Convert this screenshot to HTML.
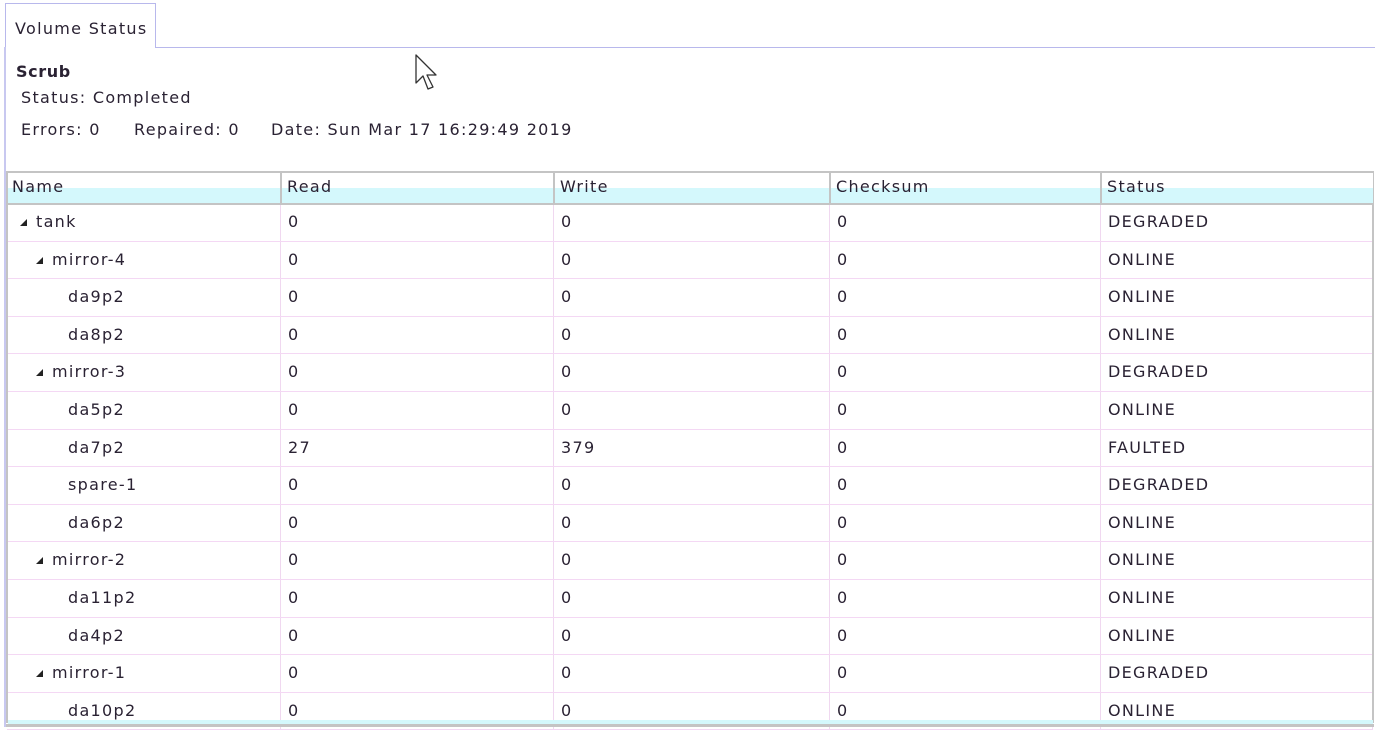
<!DOCTYPE html>
<html><head><meta charset="utf-8"><style>
*{margin:0;padding:0;box-sizing:border-box}
body{width:1375px;height:727px;background:#fff;font-family:"DejaVu Sans","Liberation Sans",sans-serif;font-size:16px;letter-spacing:1.3px;color:#2a2233;position:relative;overflow:hidden}
.a{position:absolute;white-space:nowrap}
.row{position:absolute;left:7px;width:1366px;height:37.6px;border-bottom:1px solid #f4d8f4}
.c{position:absolute;top:0;height:100%;line-height:36px;padding-left:7px;border-right:1px solid #f0d8f0;overflow:hidden}
.t{display:inline-block;width:0;height:0;border-left:7px solid transparent;border-bottom:7px solid #222;margin-right:9px;vertical-align:1px}
</style></head><body>
<div class="a" style="left:5px;top:3px;width:151px;height:45px;border:1px solid #b8b8ec;border-bottom:none;background:#fff"></div>
<div class="a" style="left:155px;top:47px;width:1220px;height:1px;background:#b8b8ec"></div>
<div class="a" style="left:4px;top:47px;width:2px;height:680px;background:#c8c8f0"></div>
<div class="a" style="left:15px;top:19px">Volume Status</div>
<div class="a" style="left:16px;top:62px;font-weight:bold;letter-spacing:0.6px">Scrub</div>
<div class="a" style="left:21px;top:88px">Status: Completed</div>
<div class="a" style="left:21px;top:120px">Errors: 0</div>
<div class="a" style="left:134px;top:120px">Repaired: 0</div>
<div class="a" style="left:271px;top:120px">Date: Sun Mar 17 16:29:49 2019</div>
<svg class="a" style="left:414px;top:54px" width="26" height="40" viewBox="0 0 26 40"><path d="M2 1 L2 29 L9 22 L14 35 L19 33 L13 21 L22 21 Z" fill="#fff" stroke="#333" stroke-width="1.3" stroke-linejoin="round"/></svg>
<div id="rows"></div>
<div class="a" style="left:6px;top:171px;width:1368px;height:552px;border:2px solid #c4c4c4;border-bottom:none"></div>
<div class="a" style="left:8px;top:173px;width:1365px;height:15px;background:#fff"></div>
<div class="a" style="left:8px;top:188px;width:1365px;height:15px;background:#d4f8fc"></div>
<div class="a" style="left:8px;top:203px;width:1365px;height:2px;background:#c4c4c4"></div>
<div class="a" style="left:280px;top:173px;width:2px;height:31px;background:#c4c4c4"></div>
<div class="a" style="left:553px;top:173px;width:2px;height:31px;background:#c4c4c4"></div>
<div class="a" style="left:829px;top:173px;width:2px;height:31px;background:#c4c4c4"></div>
<div class="a" style="left:1100px;top:173px;width:2px;height:31px;background:#c4c4c4"></div>
<div class="a" style="left:12px;top:177px">Name</div>
<div class="a" style="left:287px;top:177px">Read</div>
<div class="a" style="left:560px;top:177px">Write</div>
<div class="a" style="left:836px;top:177px">Checksum</div>
<div class="a" style="left:1107px;top:177px">Status</div>
<div class="a" style="left:8px;top:720px;width:1365px;height:4px;background:#d4f8fc"></div>
<div class="a" style="left:6px;top:724px;width:1368px;height:3px;background:#c4c4c4"></div>
<script>
var d=[[0,1,"tank",0,0,0,"DEGRADED"],[1,1,"mirror-4",0,0,0,"ONLINE"],[2,0,"da9p2",0,0,0,"ONLINE"],[2,0,"da8p2",0,0,0,"ONLINE"],[1,1,"mirror-3",0,0,0,"DEGRADED"],[2,0,"da5p2",0,0,0,"ONLINE"],[2,0,"da7p2",27,379,0,"FAULTED"],[2,0,"spare-1",0,0,0,"DEGRADED"],[2,0,"da6p2",0,0,0,"ONLINE"],[1,1,"mirror-2",0,0,0,"ONLINE"],[2,0,"da11p2",0,0,0,"ONLINE"],[2,0,"da4p2",0,0,0,"ONLINE"],[1,1,"mirror-1",0,0,0,"DEGRADED"],[2,0,"da10p2",0,0,0,"ONLINE"]];
var h="";d.forEach(function(r,i){var pad=r[0]==0?13:r[0]==1?29:61;
h+='<div class="row" style="top:'+(204+37.6*i)+'px"><div class="c" style="left:0;width:274px;padding-left:'+pad+'px">'+(r[1]?'<span class="t"></span>':'')+r[2]+'</div><div class="c" style="left:274px;width:273px">'+r[3]+'</div><div class="c" style="left:547px;width:276px">'+r[4]+'</div><div class="c" style="left:823px;width:271px">'+r[5]+'</div><div class="c" style="left:1094px;width:272px">'+r[6]+'</div></div>';});
document.getElementById("rows").innerHTML=h;
</script>
</body></html>
